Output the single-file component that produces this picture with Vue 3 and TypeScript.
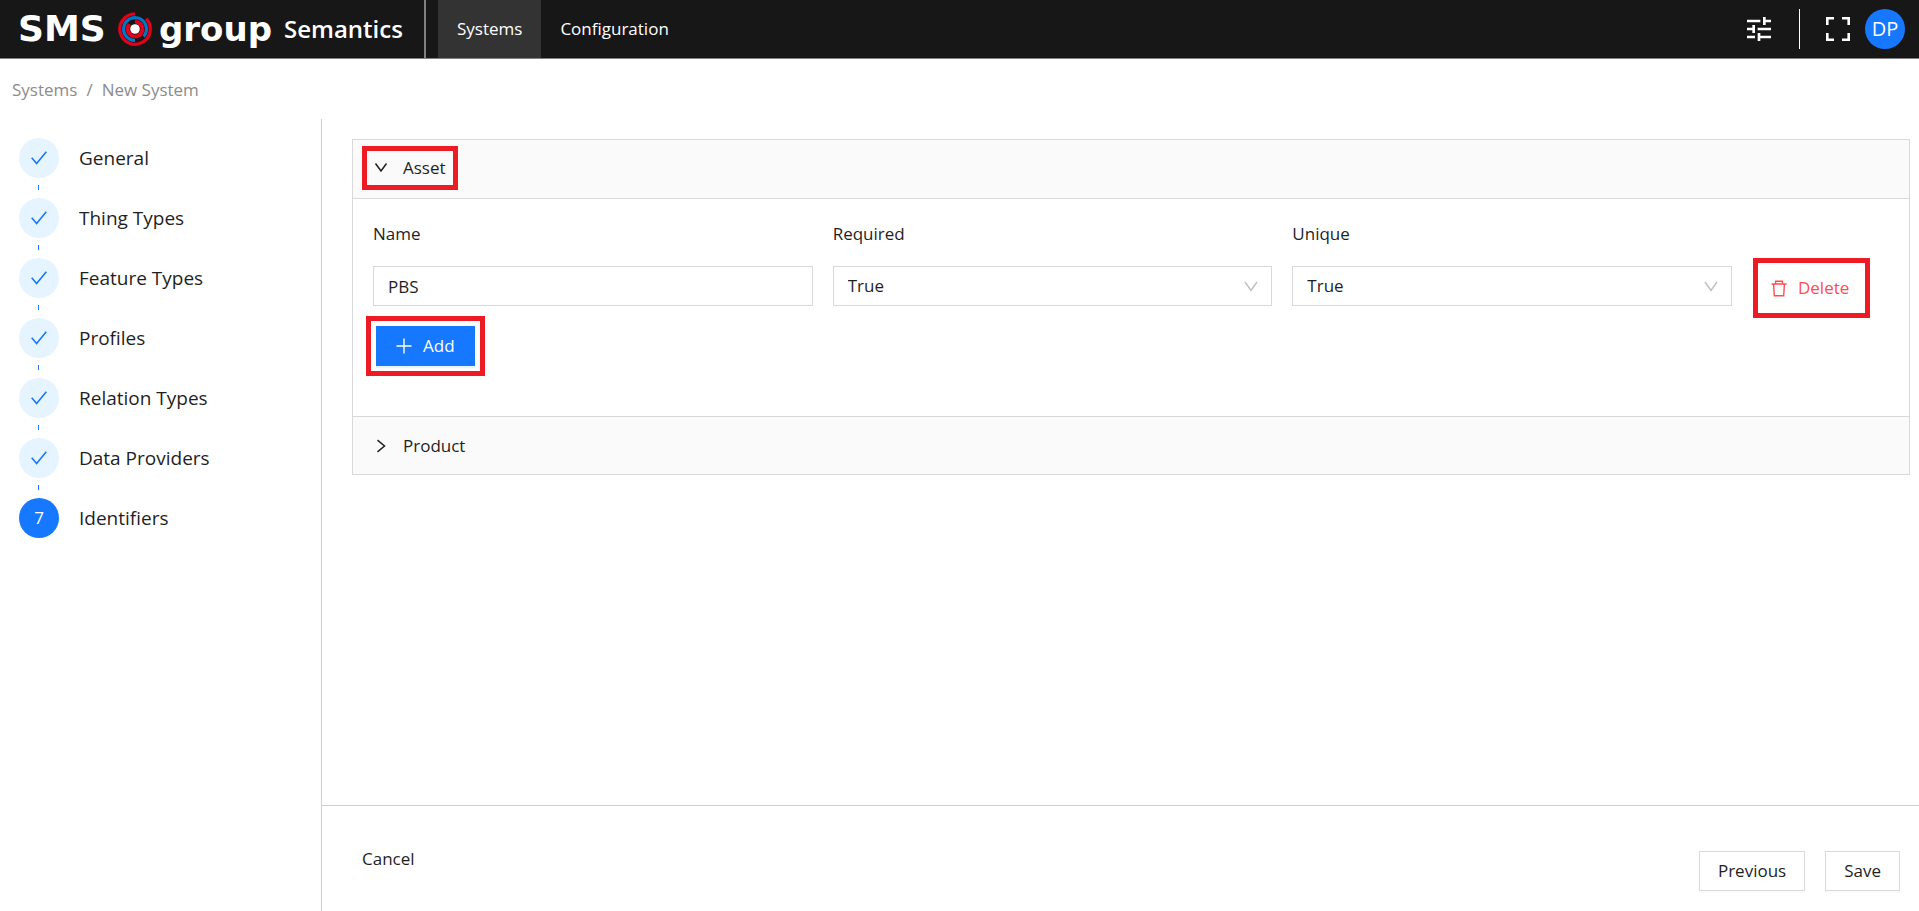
<script setup lang="ts">
import { ref } from 'vue'

interface Identifier {
  name: string
  required: string
  unique: string
}

const steps: string[] = [
  'General',
  'Thing Types',
  'Feature Types',
  'Profiles',
  'Relation Types',
  'Data Providers',
  'Identifiers',
]
const current = ref(6)
const assetOpen = ref(true)
const rows = ref<Identifier[]>([{ name: 'PBS', required: 'True', unique: 'True' }])

function addRow(): void {
  rows.value.push({ name: '', required: 'True', unique: 'True' })
}
function removeRow(index: number): void {
  rows.value.splice(index, 1)
}
</script>

<template>
  <div class="page">
    <header class="topbar">
      <div class="brand">
        <span class="logo-word sms">SMS</span>
        <svg class="logo-mark" viewBox="0 0 34 34" aria-hidden="true">
          <g fill="none" stroke-width="3.2">
            <path d="M17 1.8A15.2 15.2 0 1 0 28.2 6.7" stroke="#e2001a" />
            <path d="M17 28.4A11.4 11.4 0 1 1 25.6 24.5" stroke="#0077c8" />
            <path d="M17 9.6A7.4 7.4 0 1 1 11.4 12.2" stroke="#e2001a" stroke-width="3.8" />
          </g>
          <circle cx="17" cy="17" r="4.8" fill="#fff" />
        </svg>
        <span class="logo-word group">group</span>
        <span class="product">Semantics</span>
      </div>
      <nav class="tabs">
        <a href="#systems" class="tab active">Systems</a>
        <a href="#configuration" class="tab">Configuration</a>
      </nav>
      <div class="tools">
        <button class="icon-btn" aria-label="Settings">
          <svg viewBox="3 3 18 18" width="24" height="24" fill="currentColor">
            <path d="M3 17v2h6v-2H3zM3 5v2h10V5H3zm10 16v-2h8v-2h-8v-2h-2v6h2zM7 9v2H3v2h4v2h2V9H7zm14 4v-2H11v2h10zm-6-4h2V7h4V5h-4V3h-2v6z" />
          </svg>
        </button>
        <span class="tool-rule"></span>
        <button class="icon-btn" aria-label="Full screen">
          <svg viewBox="0 0 24 24" width="24" height="24" fill="none" stroke="currentColor" stroke-width="2.6">
            <path d="M1.3 8V1.3H8M16 1.3h6.7V8M22.7 16v6.7H16M8 22.7H1.3V16" />
          </svg>
        </button>
        <button class="avatar">DP</button>
      </div>
    </header>

    <nav class="crumbs" aria-label="Breadcrumb">
      <a href="#systems">Systems</a>
      <span>/</span>
      <span>New System</span>
    </nav>

    <div class="body">
      <aside class="sidebar">
        <ol class="steps">
          <li v-for="(step, i) in steps" :key="step" class="step">
            <span class="bullet" :class="{ current: i === current }">
              <svg v-if="i < current" viewBox="0 0 16 14" width="16" height="14" fill="none" stroke="currentColor" stroke-width="1.6">
                <path d="M.7 6.8 5.6 12.6 15.3.8" />
              </svg>
              <template v-else>{{ i + 1 }}</template>
            </span>
            <span class="step-title">{{ step }}</span>
          </li>
        </ol>
      </aside>

      <main class="content">
        <div class="scroll">
          <div class="collapse">
            <h2 class="panel-head first">
              <button class="toggle ringed" :aria-expanded="assetOpen" @click="assetOpen = !assetOpen">
                <svg viewBox="0 0 14 14" width="14" height="14" fill="none" stroke="currentColor" stroke-width="1.5">
                  <path d="M1.5 2.5 7 10 12.5 2.5" />
                </svg>
                Asset
              </button>
            </h2>
            <div v-if="assetOpen" class="panel-body">
              <div class="grid labels">
                <span id="name-label">Name</span>
                <span id="required-label">Required</span>
                <span id="unique-label">Unique</span>
              </div>
              <div v-for="(row, i) in rows" :key="i" class="grid">
                <input v-model="row.name" class="field" type="text" aria-labelledby="name-label" />
                <div class="select">
                  <select v-model="row.required" class="field" aria-labelledby="required-label">
                    <option>True</option>
                    <option>False</option>
                  </select>
                  <svg viewBox="0 0 14 14" width="14" height="14" fill="none" stroke="currentColor" stroke-width="1.4">
                    <path d="M1 3 7 11.5 13 3" />
                  </svg>
                </div>
                <div class="select">
                  <select v-model="row.unique" class="field" aria-labelledby="unique-label">
                    <option>True</option>
                    <option>False</option>
                  </select>
                  <svg viewBox="0 0 14 14" width="14" height="14" fill="none" stroke="currentColor" stroke-width="1.4">
                    <path d="M1 3 7 11.5 13 3" />
                  </svg>
                </div>
                <div class="row-end">
                  <button class="delete" @click="removeRow(i)">
                    <svg viewBox="0 0 16 17" width="16" height="17" fill="none" stroke="currentColor" stroke-width="1.4">
                      <path d="M.5 4h15M4.6 4V1.2h6.8V4M2.6 4l.7 11.8h9.4L13.4 4" />
                    </svg>
                    Delete
                  </button>
                </div>
              </div>
              <button class="add" @click="addRow">
                <svg viewBox="0 0 16 16" width="16" height="16" fill="none" stroke="currentColor" stroke-width="1.4">
                  <path d="M8 .5v15M.5 8h15" />
                </svg>
                Add
              </button>
            </div>
            <h2 class="panel-head second">
              <button class="toggle" aria-expanded="false">
                <svg viewBox="0 0 14 14" width="14" height="14" fill="none" stroke="currentColor" stroke-width="1.5">
                  <path d="M3.5 1.2 10.5 7 3.5 12.8" />
                </svg>
                Product
              </button>
            </h2>
          </div>
        </div>
        <footer class="footer">
          <button class="cancel">Cancel</button>
          <div class="actions">
            <button class="btn">Previous</button>
            <button class="btn">Save</button>
          </div>
        </footer>
      </main>
    </div>
  </div>
</template>

<style>
body {
  margin: 0;
  background: #fff;
}
</style>

<style scoped>
* {
  box-sizing: border-box;
}
.page {
  display: flex;
  flex-direction: column;
  min-height: 100vh;
  font: 17px/28px 'Segoe UI', 'Open Sans', 'Noto Sans', sans-serif;
  color: #1f1f1f;
}
button,
input,
select {
  margin: 0;
  padding: 0;
  font: inherit;
  color: inherit;
  background: none;
  border: 0;
  border-radius: 0;
}
button {
  display: inline-flex;
  align-items: center;
  cursor: pointer;
}
a {
  color: inherit;
  text-decoration: none;
}
svg {
  flex: none;
}

.topbar {
  display: flex;
  height: 59px;
  background: #171717;
  border-bottom: 1px solid #808080;
  color: #fff;
}
.brand {
  display: flex;
  align-items: center;
  width: 426px;
  padding-left: 18px;
  border-right: 2px solid #808080;
}
.logo-word {
  font: 700 34px/56px 'DejaVu Sans', sans-serif;
}
.sms {
  min-width: 93px;
  font-size: 36px;
}
.group {
  min-width: 112px;
}
.logo-mark {
  width: 34px;
  height: 34px;
  margin: 0 7px;
}
.product {
  margin-left: 12px;
  font-size: 24px;
  font-weight: 600;
}
.tabs {
  display: flex;
  margin-left: 12px;
}
.tab {
  display: flex;
  align-items: center;
  padding: 0 19px;
}
.tab.active {
  background: #333;
}
.tools {
  display: flex;
  align-items: center;
  margin-left: auto;
  padding-right: 14px;
}
.tool-rule {
  width: 1px;
  height: 40px;
  margin: 0 26px 0 28px;
  background: #fff;
}
.avatar {
  justify-content: center;
  width: 40px;
  height: 40px;
  margin-left: 15px;
  border-radius: 50%;
  background: #1677ff;
  font-size: 20px;
}

.crumbs {
  display: flex;
  align-items: center;
  gap: 9px;
  height: 60px;
  padding: 2px 0 0 12px;
  color: #8c8c8c;
}

.body {
  display: flex;
  flex: 1;
}
.sidebar {
  width: 322px;
  padding: 19px;
  border-right: 1px solid #cfcfcf;
}
.steps {
  display: flex;
  flex-direction: column;
  gap: 20px;
  margin: 0;
  padding: 0;
  list-style: none;
}
.step {
  position: relative;
  display: flex;
  align-items: center;
  gap: 20px;
  height: 40px;
}
.step:not(:last-child)::after {
  content: '';
  position: absolute;
  top: 47px;
  left: 19px;
  width: 1px;
  height: 5px;
  background: #1677ff;
}
.bullet {
  display: flex;
  align-items: center;
  justify-content: center;
  width: 40px;
  height: 40px;
  border-radius: 50%;
  background: #e6f4ff;
  color: #1677ff;
}
.bullet.current {
  background: #1677ff;
  color: #fff;
}
.step-title {
  font-size: 19px;
}

.content {
  display: flex;
  flex: 1;
  flex-direction: column;
  min-width: 0;
}
.scroll {
  flex: 1;
  padding: 20px 9px 20px 30px;
}
.collapse {
  border: 1px solid #d9d9d9;
}
.panel-head {
  display: flex;
  align-items: center;
  height: 58px;
  margin: 0;
  padding-left: 9px;
  background: #fafafa;
  font: inherit;
}
.panel-head.first {
  padding-bottom: 2px;
}
.panel-head.second {
  border-top: 1px solid #d9d9d9;
}
.toggle {
  gap: 15px;
  height: 44px;
  padding: 0 7px;
  border: 5px solid transparent;
}
.toggle.ringed {
  border-color: #ed1c24;
}
.panel-body {
  padding: 21px 20px 0;
  border-top: 1px solid #d9d9d9;
}
.grid {
  display: grid;
  grid-template-columns: 1fr 1fr 1fr 137px;
  align-items: start;
  gap: 20px;
}
.labels {
  margin-bottom: 18px;
}
.field {
  width: 100%;
  height: 40px;
  padding: 0 14px;
  border: 1px solid #d9d9d9;
  background: #fff;
}
.select {
  display: grid;
  align-items: center;
}
.select > * {
  grid-area: 1 / 1;
}
.select select {
  appearance: none;
}
.select svg {
  justify-self: end;
  margin-right: 14px;
  color: #bfbfbf;
  pointer-events: none;
}
.row-end {
  display: flex;
}
.delete {
  gap: 11px;
  height: 40px;
  margin: 2px 0 0 11px;
  padding: 0 11px 0 8px;
  color: #ff4d4f;
  outline: 5px solid #ed1c24;
  outline-offset: 5px;
}
.add {
  gap: 11px;
  height: 40px;
  margin: 18px 0 50px 3px;
  padding: 0 20px;
  background: #1677ff;
  box-shadow: 0 2px 0 #e6f4ff;
  color: #fff;
  outline: 5px solid #ed1c24;
  outline-offset: 5px;
}

.footer {
  display: flex;
  align-items: flex-start;
  justify-content: space-between;
  height: 106px;
  padding: 39px 19px 0 40px;
  border-top: 1px solid #cfcfcf;
}
.actions {
  display: flex;
  gap: 20px;
  padding-top: 6px;
}
.btn {
  height: 40px;
  padding: 0 18px;
  border: 1px solid #d9d9d9;
  background: #fff;
  box-shadow: 0 2px 0 #fafafa;
}
</style>
